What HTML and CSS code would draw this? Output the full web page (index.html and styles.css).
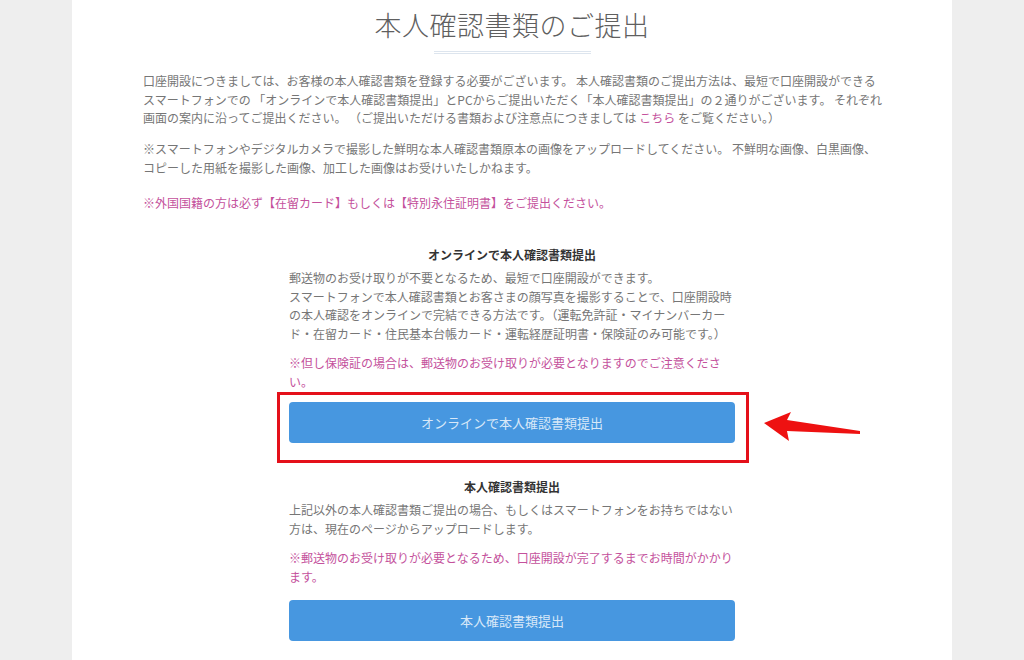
FILE: index.html
```html
<!DOCTYPE html>
<html lang="ja">
<head>
    <meta charset="UTF-8">
    <meta name="viewport" content="width=device-width, initial-scale=1.0">
    <title>本人確認書類のご提出</title>
    <link rel="stylesheet" href="styles.css">
</head>
<body>
    <main class="panel">
        <h1 class="title">本人確認書類のご提出</h1>

        <div class="intro">
            <p>口座開設につきましては、お客様の本人確認書類を登録する必要がございます。 本人確認書類のご提出方法は、最短で口座開設ができる<br>スマートフォンでの 「オンラインで本人確認書類提出」とPCからご提出いただく「本人確認書類提出」の２通りがございます。 それぞれ<br>画面の案内に沿ってご提出ください。 （ご提出いただける書類および注意点につきましては <a href="#" class="link">こちら</a> をご覧ください。）</p>
            <p class="gap-sm">※スマートフォンやデジタルカメラで撮影した鮮明な本人確認書類原本の画像をアップロードしてください。 不鮮明な画像、白黒画像、<br>コピーした用紙を撮影した画像、加工した画像はお受けいたしかねます。</p>
            <p class="note gap-md">※外国国籍の方は必ず【在留カード】もしくは【特別永住証明書】をご提出ください。</p>
        </div>

        <section class="method first">
            <h2>オンラインで本人確認書類提出</h2>
            <p>郵送物のお受け取りが不要となるため、最短で口座開設ができます。<br>スマートフォンで本人確認書類とお客さまの顔写真を撮影することで、口座開設時<br>の本人確認をオンラインで完結できる方法です。（運転免許証・マイナンバーカー<br>ド・在留カード・住民基本台帳カード・運転経歴証明書・保険証のみ可能です。）</p>
            <p class="note">※但し保険証の場合は、郵送物のお受け取りが必要となりますのでご注意くださ<br>い。</p>
            <div class="highlight">
                <button class="submit">オンラインで本人確認書類提出</button>
                <svg class="arrow" width="100" height="34" viewBox="0 0 100 34">
                    <polygon points="2,13 29,2 25,10 98,21 98,24 25,21 27,31" fill="#ee1111"/>
                </svg>
            </div>
        </section>

        <section class="method second">
            <h2>本人確認書類提出</h2>
            <p>上記以外の本人確認書類ご提出の場合、もしくはスマートフォンをお持ちではない<br>方は、現在のページからアップロードします。</p>
            <p class="note">※郵送物のお受け取りが必要となるため、口座開設が完了するまでお時間がかかり<br>ます。</p>
            <button class="submit">本人確認書類提出</button>
        </section>
    </main>
</body>
</html>
```

FILE: styles.css
```css
* {
    margin: 0;
    padding: 0;
    box-sizing: border-box;
}

body {
    background-color: #eeeeee;
    font-family: "Noto Sans CJK JP", "Noto Sans", sans-serif;
    color: #767676;
    font-size: 12px;
    height: 660px;
    overflow: hidden;
}

.panel {
    width: 880px;
    margin-left: 72px;
    background-color: white;
    min-height: 660px;
    padding: 8px 71px 0;
}

.title {
    font-size: 27px;
    font-weight: 300;
    line-height: 34px;
    color: #5f5f5f;
    text-align: center;
    letter-spacing: 0.5px;
}

.title::after {
    content: "";
    display: block;
    width: 157px;
    height: 3px;
    margin: 9px auto 0;
    border-top: 3px double #dde5ee;
}

.intro {
    margin-top: 15px;
    line-height: 18.5px;
    white-space: nowrap;
}

.gap-sm {
    margin-top: 12.5px;
}

.gap-md {
    margin-top: 16.5px;
}

.note {
    color: #c4519c;
}

.link {
    color: #c4519c;
    text-decoration: none;
}

.method {
    width: 446px;
    margin: 0 auto;
    line-height: 18.5px;
    white-space: nowrap;
}

.method.first {
    margin-top: 34px;
}

.method.second {
    margin-top: 35px;
}

.method h2 {
    font-size: 12px;
    font-weight: bold;
    color: #333333;
    text-align: center;
    line-height: 18px;
    margin-bottom: 5px;
}

.method .note {
    margin-top: 11px;
}

.submit {
    display: block;
    width: 446px;
    height: 41px;
    border: none;
    border-radius: 4px;
    background-color: #4797e0;
    color: #d8e8f8;
    font-family: inherit;
    font-size: 13px;
    margin-top: 14px;
}

.highlight {
    position: relative;
    margin-top: 11px;
}

.highlight .submit {
    margin-top: 0;
}

.highlight::after {
    content: "";
    position: absolute;
    top: -10px;
    left: -12px;
    right: -14px;
    bottom: -20px;
    border: 3px solid #e4101a;
}

.arrow {
    position: absolute;
    left: 473px;
    top: 8px;
}
```
